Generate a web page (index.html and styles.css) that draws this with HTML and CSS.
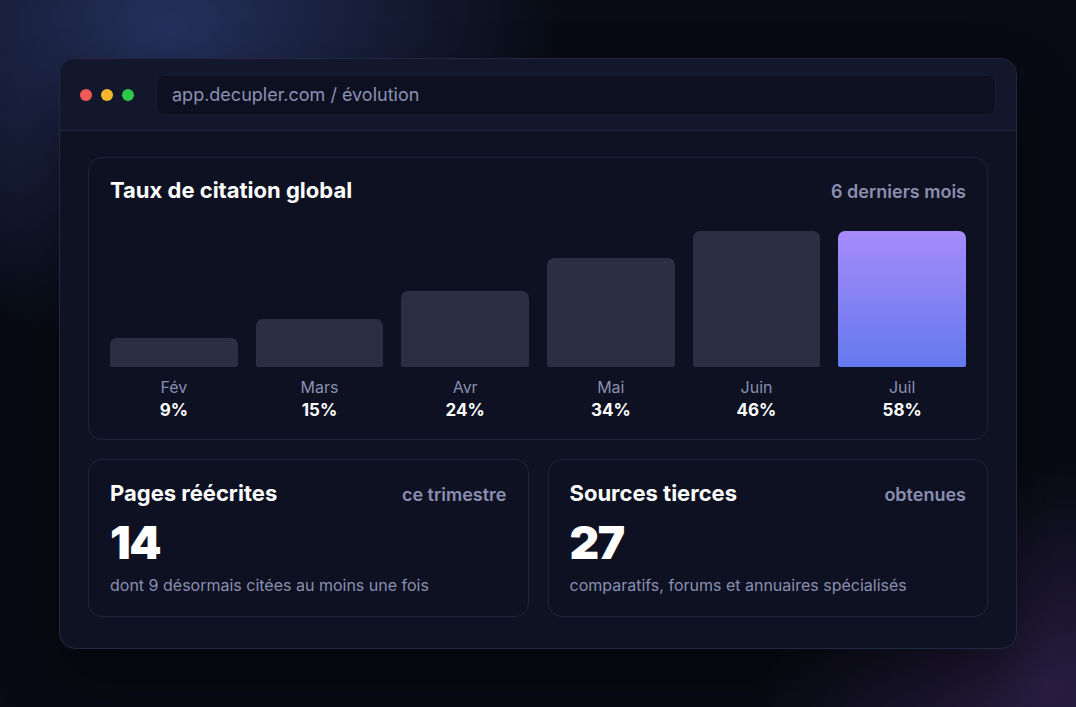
FILE: index.html
```html
<!DOCTYPE html>
<html lang="fr">
<head>
    <meta charset="UTF-8">
    <meta name="viewport" content="width=device-width, initial-scale=1.0">
    <title>Évolution — decupler</title>
    <link rel="stylesheet" href="styles.css">
</head>
<body>
    <div class="window">
        <div class="topbar">
            <div class="dots">
                <span class="dot red"></span>
                <span class="dot yellow"></span>
                <span class="dot green"></span>
            </div>
            <div class="url">app.decupler.com / évolution</div>
        </div>

        <div class="content">
            <section class="card chart-card">
                <div class="card-head">
                    <h3>Taux de citation global</h3>
                    <span class="meta">6 derniers mois</span>
                </div>
                <div class="chart">
                    <div class="col"><div class="bar" style="height: 29px"></div><span class="month">Fév</span><strong>9%</strong></div>
                    <div class="col"><div class="bar" style="height: 48px"></div><span class="month">Mars</span><strong>15%</strong></div>
                    <div class="col"><div class="bar" style="height: 76px"></div><span class="month">Avr</span><strong>24%</strong></div>
                    <div class="col"><div class="bar" style="height: 109px"></div><span class="month">Mai</span><strong>34%</strong></div>
                    <div class="col"><div class="bar" style="height: 136px"></div><span class="month">Juin</span><strong>46%</strong></div>
                    <div class="col"><div class="bar current" style="height: 136px"></div><span class="month">Juil</span><strong>58%</strong></div>
                </div>
            </section>

            <div class="stats">
                <section class="card stat">
                    <div class="card-head">
                        <h3>Pages réécrites</h3>
                        <span class="meta">ce trimestre</span>
                    </div>
                    <div class="big">14</div>
                    <p>dont 9 désormais citées au moins une fois</p>
                </section>
                <section class="card stat">
                    <div class="card-head">
                        <h3>Sources tierces</h3>
                        <span class="meta">obtenues</span>
                    </div>
                    <div class="big">27</div>
                    <p>comparatifs, forums et annuaires spécialisés</p>
                </section>
            </div>
        </div>
    </div>
</body>
</html>
```

FILE: styles.css
```css
* { box-sizing: border-box; }

html, body { height: 100%; }

body {
    margin: 0;
    font-family: Inter, "Noto Sans", sans-serif;
    color: #fff;
    background-color: #080b14;
    background-image:
        radial-gradient(ellipse 560px 460px at 170px 30px, rgba(40, 52, 100, 0.9), transparent 70%),
        radial-gradient(ellipse 420px 320px at 1050px 690px, rgba(52, 36, 82, 0.75), transparent 70%);
    padding: 58px 59px 0 59px;
}

.window {
    width: 958px;
    height: 591px;
    border-radius: 16px;
    border: 1px solid #232840;
    background: #0e1222;
    overflow: hidden;
    box-shadow: 0 30px 60px rgba(0, 0, 0, 0.45);
}

.topbar {
    height: 72px;
    display: flex;
    align-items: center;
    gap: 22px;
    padding: 0 20px;
    background: #12172b;
    border-bottom: 1px solid #232840;
}

.dots { display: flex; gap: 9px; }
.dot { width: 12px; height: 12px; border-radius: 50%; }
.red { background: #f25a55; }
.yellow { background: #f5b52e; }
.green { background: #2bc84a; }

.url {
    flex: 1;
    height: 40px;
    display: flex;
    align-items: center;
    padding: 0 15px;
    border-radius: 8px;
    background: #0c1021;
    border: 1px solid #181d33;
    color: #8b91b1;
    font-size: 18px;
}

.content { padding: 26px 28px 0 28px; }

.card {
    background: #0d1122;
    border: 1px solid #1f2438;
    border-radius: 14px;
}

.card-head {
    display: flex;
    justify-content: space-between;
    align-items: baseline;
}

.card-head h3 {
    margin: 0;
    font-size: 22px;
    font-weight: 700;
    line-height: 27px;
}

.meta {
    color: #8a8fb0;
    font-size: 18px;
    font-weight: 600;
}

.chart-card {
    height: 283px;
    padding: 19px 21px 19px 21px;
    display: flex;
    flex-direction: column;
}

.chart {
    display: grid;
    grid-template-columns: repeat(6, 1fr);
    gap: 18px;
    margin-top: auto;
}

.col {
    display: flex;
    flex-direction: column;
    justify-content: flex-end;
    align-items: center;
}

.bar {
    width: 100%;
    background: #2b2f42;
    border-radius: 7px 7px 2px 2px;
}

.bar.current { background: linear-gradient(180deg, #a68bfa 0%, #6479ee 100%); }

.month {
    margin-top: 11px;
    color: #8a8fb0;
    font-size: 16px;
    line-height: 19px;
}

.col strong {
    margin-top: 3px;
    font-size: 17px;
    font-weight: 700;
    line-height: 20px;
}

.stats {
    display: grid;
    grid-template-columns: 1fr 1fr;
    gap: 19px;
    margin-top: 19px;
}

.stat { height: 158px; padding: 20px 21px 0 21px; }

.big {
    margin-top: 12px;
    font-size: 46px;
    font-weight: 900;
    line-height: 46px;
    letter-spacing: -1.5px;
}

.stat p {
    margin: 10px 0 0;
    color: #8a8fb0;
    font-size: 16px;
}
```
